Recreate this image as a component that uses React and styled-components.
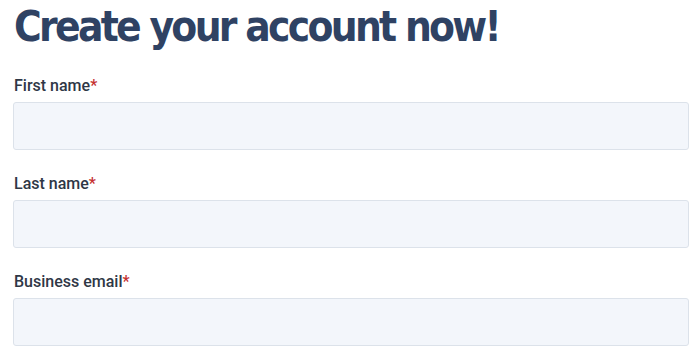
import styled, { createGlobalStyle } from 'styled-components';

const GlobalStyle = createGlobalStyle`
  body {
    margin: 0;
    background: #fff;
    font-family: Roboto, "Liberation Sans", sans-serif;
  }
`;

const Wrapper = styled.div`
  width: 676px;
  padding: 0 0 0 13px;
`;

const Title = styled.h1`
  margin: 0 0 22px 1px;
  font-family: "DejaVu Sans Condensed", "DejaVu Sans", sans-serif;
  font-weight: 700;
  font-size: 42px;
  line-height: 54px;
  letter-spacing: -2.7px;
  color: #2f4263;
`;

const Field = styled.div`
  display: flex;
  flex-direction: column;
  margin-bottom: 24px;
`;

const Label = styled.label`
  font-size: 16px;
  font-weight: 500;
  line-height: 20px;
  color: #2f3746;
  margin: 0 0 6px 1px;
`;

const Star = styled.span`
  color: #c53030;
`;

const Input = styled.input`
  box-sizing: border-box;
  width: 100%;
  height: 48px;
  padding: 0 12px;
  background: #f3f6fb;
  border: 1px solid #dce2ea;
  border-radius: 3px;
  font-size: 15px;
  outline: none;
`;

const fields = ['First name', 'Last name', 'Business email'];

function App() {
  return (
    <Wrapper>
      <GlobalStyle />
      <Title>Create your account now!</Title>
      {fields.map((name) => (
        <Field key={name}>
          <Label>
            {name}
            <Star>*</Star>
          </Label>
          <Input type="text" />
        </Field>
      ))}
    </Wrapper>
  );
}

export default App;
